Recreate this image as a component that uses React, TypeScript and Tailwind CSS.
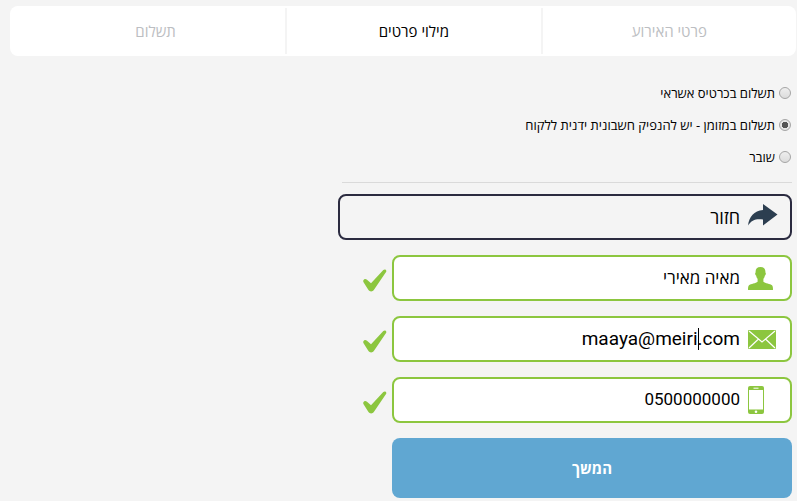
import { useState, type ReactNode } from "react";
import clsx from "clsx";

const steps = ["פרטי האירוע", "מילוי פרטים", "תשלום"];

const payments = [
  { id: "credit", label: "תשלום בכרטיס אשראי" },
  { id: "cash", label: "תשלום במזומן - יש להנפיק חשבונית ידנית ללקוח" },
  { id: "voucher", label: "שובר" },
];

function ArrowIcon() {
  return (
    <svg width="30" height="22" viewBox="0 0 30 22" fill="#2c3e50" aria-hidden="true">
      <path d="M15 0 29.500 10.500 15 21.500V15.500C8 14.500 3.500 16 0 21.500 1 12.500 6 7 15 6Z" />
    </svg>
  );
}

function UserIcon() {
  return (
    <svg width="25" height="23" viewBox="0 0 25 23" fill="#8cc63f" aria-hidden="true">
      <path d="M12.500 0C9 0 7.400 2 7.600 5.400c-.8.300-.5 2.600.5 3 .3 1.600.8 2.600 1.500 3.300v3.100c-1.600 1.700-6.900 1.900-8.600 3.500C.2 19.100 0 21 0 22.500q0 .5.500.5h24q.5 0 .5-.5c0-1.500-.2-3.400-1-4.200-1.700-1.600-7-1.800-8.600-3.500v-3.100c.7-.7 1.200-1.700 1.500-3.300 1-.4 1.300-2.700.5-3C17.600 2 16 0 12.500 0Z" />
    </svg>
  );
}

function MailIcon() {
  return (
    <svg width="28" height="19" viewBox="0 0 28 19" aria-hidden="true">
      <rect width="28" height="19" rx="1" fill="#8cc63f" />
      <path d="m1 1 13 11L27 1M1 18l9.500-9M27 18l-9.500-9" fill="none" stroke="#fff" strokeWidth="1.200" />
    </svg>
  );
}

function PhoneIcon() {
  return (
    <svg width="16" height="28" viewBox="0 0 16 28" aria-hidden="true">
      <rect width="16" height="28" rx="2" fill="#8cc63f" />
      <path d="M1 4h14v19.500H1z" fill="#fff" />
      <path d="M5.500 2.200h5" stroke="#fff" />
      <circle cx="8" cy="25.700" r="1.300" fill="#fff" />
    </svg>
  );
}

function CheckIcon() {
  return (
    <svg width="24" height="23" viewBox="0 0 24 23" fill="#8cc63f" aria-label="תקין" role="img">
      <path d="M.4 11.200C1.200 9.800 2.800 9.700 4 10.800L8 14.200 20.300 1C21.800-.3 23.900.8 23.200 2.700L11 20.800C9.500 22.900 6.800 22.900 5.300 20.800L.7 13.500C.2 12.700 0 12 .4 11.200Z" />
    </svg>
  );
}

type FieldProps = {
  label: string;
  type: string;
  initial: string;
  icon: ReactNode;
  className: string;
  caret?: boolean;
};

function Field({ label, type, initial, icon, className, caret }: FieldProps) {
  const [value, setValue] = useState(initial);
  const [touched, setTouched] = useState(false);

  return (
    <div className="flex items-center gap-[5px]">
      <label className="relative flex h-[46px] min-w-0 flex-1 items-center rounded-lg border-2 border-[#8cc63f] bg-white ps-3">
        <span className="flex w-[30px] shrink-0 justify-end">{icon}</span>
        <input
          type={type}
          aria-label={label}
          value={value}
          onChange={(e) => setValue(e.target.value)}
          onFocus={() => setTouched(true)}
          className={clsx("w-full min-w-0 bg-transparent px-2 text-right text-black outline-none", className)}
        />
        {caret && !touched && <span className="absolute right-[91px] top-[10px] h-[22px] w-px bg-black" />}
      </label>
      <span className="w-[49px] shrink-0 pt-1">
        <CheckIcon />
      </span>
    </div>
  );
}

export default function App() {
  const [payment, setPayment] = useState("cash");

  return (
    <div dir="rtl" className="min-h-screen bg-[#f4f4f4] pt-[6px] font-['Open_Sans','Liberation_Sans',sans-serif] text-black">
      <nav className="ms-px me-[10px] grid h-[50px] grid-cols-[13fr_13fr_14fr] rounded-lg bg-white py-[2px]">
        {steps.map((step, i) => (
          <a
            key={step}
            href="#"
            aria-current={i === 1 ? "step" : undefined}
            className={clsx(
              "flex items-center justify-center text-[15px] font-medium",
              i < 2 && "border-e-2 border-[#f4f4f4]",
              i === 2 && "pe-4",
              i === 1 ? "text-black" : "text-[#bcbec2]",
            )}
          >
            {step}
          </a>
        ))}
      </nav>

      <form className="ms-[5px] w-[454px] max-w-full pt-[27px]" onSubmit={(e) => e.preventDefault()}>
        <fieldset className="me-1 flex flex-col gap-3 border-b border-[#dadada] ps-px pb-[15px] text-[13px] leading-5">
          {payments.map(({ id, label }) => (
            <label key={id} className="flex items-center gap-1">
              <input
                type="radio"
                name="payment"
                value={id}
                checked={payment === id}
                onChange={() => setPayment(id)}
                className="size-3 shrink-0 appearance-none rounded-full border border-[#a5a5a5] bg-linear-to-b from-[#eeeeee] to-[#dcdcdc] checked:bg-[radial-gradient(circle,#555_0_3px,#e6e6e6_3px)]"
              />
              {label}
            </label>
          ))}
        </fieldset>

        <div className="mt-[11px] flex flex-col gap-[15px]">
          <button
            type="button"
            className="flex h-[46px] items-center gap-2 rounded-lg border-2 border-[#2b2b40] ps-3 pb-1 text-lg"
          >
            <ArrowIcon />
            <span className="pt-1">חזור</span>
          </button>
          <Field label="שם מלא" type="text" initial="מאיה מאירי" icon={<UserIcon />} className="text-[17px]" />
          <Field
            label="דואר אלקטרוני"
            type="email"
            initial="maaya@meiri.com"
            icon={<MailIcon />}
            className="font-[Roboto,sans-serif] text-[19px]"
            caret
          />
          <Field
            label="טלפון"
            type="tel"
            initial="0500000000"
            icon={<PhoneIcon />}
            className="font-[Roboto,sans-serif] text-[17px]"
          />
          <button type="submit" className="me-[54px] h-[60px] rounded-lg bg-[#60a7d2] text-[15px] font-bold text-white">
            המשך
          </button>
        </div>
      </form>
    </div>
  );
}
